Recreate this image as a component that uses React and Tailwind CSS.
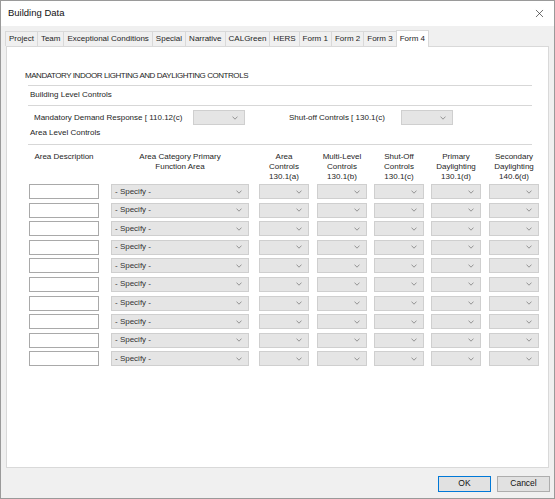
import { X } from "lucide-react";

const tabs = ["Project", "Team", "Exceptional Conditions", "Special", "Narrative", "CALGreen", "HERS", "Form 1", "Form 2", "Form 3", "Form 4"];

const columns = [
  { lines: ["Area Description"], width: "w-[70px]", cell: "w-[82px]" },
  { lines: ["Area Category Primary", "Function Area"], width: "w-[138px]", cell: "w-[148px]" },
  { lines: ["Area", "Controls", "130.1(a)"], width: "w-[50px]", cell: "w-[58px]" },
  { lines: ["Multi-Level", "Controls", "130.1(b)"], width: "w-[50px]", cell: "w-[57px]" },
  { lines: ["Shut-Off", "Controls", "130.1(c)"], width: "w-[50px]", cell: "w-[57px]" },
  { lines: ["Primary", "Daylighting", "130.1(d)"], width: "w-[50px]", cell: "w-[58px]" },
  { lines: ["Secondary", "Daylighting", "140.6(d)"], width: "w-[50px]", cell: "w-[50px]" },
];

const rows = Array.from({ length: 10 }, (_, i) => i);

function Chevron() {
  return (
    <svg width="6" height="4" viewBox="0 0 6 4" className="shrink-0">
      <path d="M0.5 0.6 L3 3.2 L5.5 0.6" fill="none" stroke="#8a8a8a" strokeWidth="0.9" />
    </svg>
  );
}

function Select({ className = "", label = "" }) {
  return (
    <div className={`flex items-center justify-between h-[15px] bg-[#e5e5e5] border border-[#cfcfcf] pl-[3px] pr-[6px] ${className}`}>
      <span className="text-[8px] text-[#333]">{label}</span>
      <Chevron />
    </div>
  );
}

function Rule() {
  return <div className="ml-[20px] w-[504px] h-px bg-[#d7d7d7]" />;
}

export default function App() {
  return (
    <div className="w-[555px] h-[499px] flex flex-col bg-[#f0f0f0] border border-[#9a9a9a] text-[#1e1e1e] font-['Liberation_Sans',Arial,sans-serif] overflow-hidden">
      <div className="h-[25px] shrink-0 bg-white flex items-center justify-between pl-[7px] pr-[8px]">
        <span className="text-[9.5px] text-[#111]">Building Data</span>
        <X size={13} strokeWidth={1.2} color="#222" />
      </div>

      <div className="h-[20px] shrink-0 flex items-end pl-[5px]">
        {tabs.map((t) =>
          t === "Form 4" ? (
            <div key={t} className="h-[17px] -ml-px px-[3px] pt-[2px] bg-white border border-b-0 border-[#d9d9d9] text-[8px] relative top-px z-10">
              {t}
            </div>
          ) : (
            <div key={t} className="h-[15px] -ml-px px-[3px] bg-[#f0f0f0] border border-b-0 border-[#d9d9d9] text-[8px] flex items-center">
              {t}
            </div>
          )
        )}
      </div>

      <div className="flex-1 mx-[5px] bg-white border border-[#d9d9d9] text-[8px] pl-px">
        <div className="pl-[17px] pt-[24px] leading-[10px] tracking-[-0.45px]">MANDATORY INDOOR LIGHTING AND DAYLIGHTING CONTROLS</div>
        <div className="mt-[4px]"><Rule /></div>
        <div className="pl-[22px] mt-[4px] leading-[10px]">Building Level Controls</div>
        <div className="mt-[5px]"><Rule /></div>

        <div className="mt-[4px] flex items-center pl-[26px]">
          <span className="w-[159px]">Mandatory Demand Response [ 110.12(c)</span>
          <Select className="w-[52px] h-[14px]" />
          <span className="ml-[44px] w-[112px]">Shut-off Controls [ 130.1(c)</span>
          <Select className="w-[52px] h-[14px]" />
        </div>

        <div className="pl-[22px] mt-[3px] leading-[10px]">Area Level Controls</div>
        <div className="mt-[6px]"><Rule /></div>

        <div className="mt-[7px] pl-[21px] flex">
          {columns.map((c, i) => (
            <div key={i} className={`${c.cell} shrink-0`}>
              <div className={`${c.width} h-[30px] text-center leading-[10px]`}>
                {c.lines.map((l) => (
                  <div key={l}>{l}</div>
                ))}
              </div>
            </div>
          ))}
        </div>

        <div className="mt-[2px] pl-[21px] flex flex-col gap-[3.6px]">
          {rows.map((r) => (
            <div key={r} className="flex">
              {columns.map((c, i) => (
                <div key={i} className={`${c.cell} shrink-0`}>
                  {i === 0 ? (
                    <div className={`${c.width} h-[15px] bg-white border border-[#a9a9a9]`} />
                  ) : (
                    <Select className={c.width} label={i === 1 ? "- Specify -" : ""} />
                  )}
                </div>
              ))}
            </div>
          ))}
        </div>
      </div>

      <div className="h-[30px] shrink-0 flex items-center justify-end gap-[6px] pr-[4px] pt-px">
        <button className="w-[53px] h-[16px] bg-[#e1e1e1] border-[1.5px] border-[#0078d7] text-[8.5px] text-[#111]">OK</button>
        <button className="w-[53px] h-[16px] bg-[#e1e1e1] border border-[#adadad] text-[8.5px] text-[#111]">Cancel</button>
      </div>
    </div>
  );
}
